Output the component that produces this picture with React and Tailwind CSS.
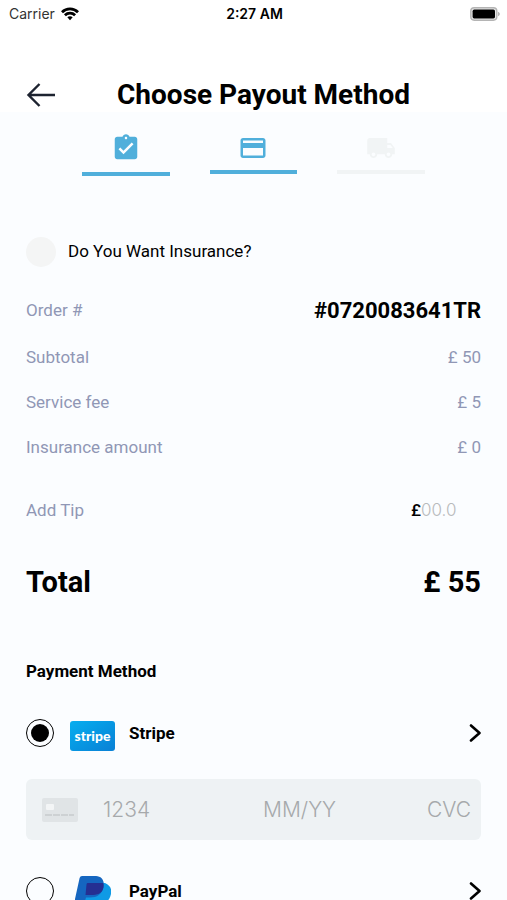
import { useState } from "react";
import { MdAssignmentTurnedIn, MdPayment, MdLocalShipping } from "react-icons/md";

const steps = [
  { label: "Order details", Icon: MdAssignmentTurnedIn, state: "done" },
  { label: "Payment", Icon: MdPayment, state: "current" },
  { label: "Delivery", Icon: MdLocalShipping, state: "next" },
];

const charges = [
  { label: "Subtotal", amount: 50 },
  { label: "Service fee", amount: 5 },
  { label: "Insurance amount", amount: 0 },
];

const StatusBar = () => (
  <div className="grid grid-cols-3 items-center h-7 pl-[9px] pr-[7px] font-['Inter',sans-serif] text-sm text-black">
    <div className="flex items-center gap-1.5">
      <span className="text-[#333]">Carrier</span>
      <svg viewBox="0 0 18 14" className="w-[18px] h-[14px]" fill="none" stroke="black" strokeWidth="2.8">
        <path d="M1 5.2C5.5.8 12.5.8 17 5.2" />
        <path d="M3.9 8.3c2.9-2.8 7.3-2.8 10.2 0" />
        <path d="M6.3 10.3c1.6-1.5 3.8-1.5 5.4 0L9 13.2z" fill="black" stroke="none" />
      </svg>
    </div>
    <span className="text-center font-semibold">2:27 AM</span>
    <svg viewBox="0 0 30 14" className="w-[30px] h-[14px] justify-self-end">
      <rect x="0.8" y="0.8" width="26" height="12.4" rx="3.4" fill="#e8e8e8" stroke="#b4b4b4" strokeWidth="1.4" />
      <rect x="2.6" y="2.6" width="22.4" height="8.8" rx="1.6" fill="black" />
      <path d="M28 4.8c2.4.8 2.4 3.6 0 4.4z" fill="#b4b4b4" />
    </svg>
  </div>
);

const Header = () => (
  <header className="grid grid-cols-[30px_1fr] items-center h-[84px] pt-[50px] px-[26px]">
    <button type="button" aria-label="Go back">
      <svg viewBox="0 0 30 26" className="w-[30px] h-[26px]" fill="none" stroke="#1d2330" strokeWidth="2.4">
        <path d="M29 13H3M13.5 2L2.5 13l11 11" />
      </svg>
    </button>
    <h1 className="pr-2.5 text-center text-[28px] leading-8 font-bold text-black whitespace-nowrap">
      Choose Payout Method
    </h1>
  </header>
);

const Steps = () => (
  <ol className="grid grid-cols-3 gap-10 px-[82px] pt-[21px]">
    {steps.map(({ label, Icon, state }) => (
      <li
        key={label}
        aria-label={label}
        className={`flex flex-col items-center ${state === "next" ? "text-[#f1f4f5]" : "text-[#50afdb]"}`}
      >
        <Icon className="size-[30px]" />
        <span
          className={`w-full h-1 bg-current ${state === "done" ? "mt-[9px]" : "mt-[7px]"}`}
        />
      </li>
    ))}
  </ol>
);

const StripeLogo = () => (
  <span className="flex items-center justify-center w-[45px] h-[30px] mt-1.5 rounded-[3px] bg-linear-to-br from-[#07aeef] to-[#0a80d5] font-['Lato',sans-serif] text-sm leading-4 font-black text-white">
    stripe
  </span>
);

const PayPalLogo = () => (
  <svg viewBox="0 0 36 42" className="w-9 h-[42px] mx-1 mt-3">
    <path d="M12 7h18c5 2 7 6 6 11-1.500 7.500-6.500 10.500-13 10.500h-4L16.500 41H5z" fill="#0f9ae5" />
    <path d="M7 0h14c5.500 0 9 5 7.500 11C27 18.500 22 21.500 15 21.500h-4L8 32H-2L4.600 2Q5.200 0 7 0z" fill="#1566c0" />
    <path d="M12.500 7H28q1 2 .5 4.500C27 18 22 19 16 19h-5.500l1-10.500Q11.600 7 12.500 7z" fill="#252f92" />
  </svg>
);

const Chevron = () => (
  <svg viewBox="0 0 12 20" className="w-3 h-5 ml-auto" fill="none" stroke="black" strokeWidth="2.6" strokeLinecap="round" strokeLinejoin="round">
    <path d="M2 2.500l8.500 7.500L2 17.500" />
  </svg>
);

const PaymentOption = ({ name, logo, checked, onChange }) => (
  <label className="flex items-center h-12 cursor-pointer">
    <span className="relative grid place-items-center size-7">
      <input
        type="radio"
        name="payment"
        checked={checked}
        onChange={onChange}
        className="peer appearance-none size-7 rounded-full border border-black"
      />
      <span className="absolute hidden peer-checked:block size-[18px] rounded-full bg-black" />
    </span>
    <span className="flex justify-center w-[45px] ml-4">{logo}</span>
    <span className="ml-[14px] text-[17px] leading-6 font-bold text-black">{name}</span>
    <Chevron />
  </label>
);

const CardFields = () => (
  <div className="flex items-center h-[61px] mt-[22px] pl-4 pr-[10px] rounded-md bg-[#eef2f4] font-['Inter',sans-serif] text-[21px] font-light">
    <svg viewBox="0 0 36 24" className="w-9 h-6 shrink-0">
      <rect width="36" height="24" rx="2" fill="#e0e4e6" />
      <rect x="4" y="6" width="8" height="6" rx="1" fill="#f3f5f6" />
      <path d="M3 17h29" stroke="#cdd1d3" strokeWidth="2" strokeDasharray="7 1" />
    </svg>
    <input aria-label="Card number" placeholder="1234" className="w-20 ml-[25px] outline-none placeholder:text-[#a6a9ab]" />
    <input aria-label="Expiry date" placeholder="MM/YY" className="w-20 mx-auto outline-none placeholder:text-[#a6a9ab]" />
    <input aria-label="Security code" placeholder="CVC" className="w-12 text-right outline-none placeholder:text-[#a6a9ab]" />
  </div>
);

const App = () => {
  const [insured, setInsured] = useState(false);
  const [method, setMethod] = useState("stripe");

  return (
    <div className="flex flex-col h-screen bg-white font-['Roboto',sans-serif]">
      <StatusBar />
      <Header />

      <main className="flex-1 overflow-y-auto [scrollbar-width:none] bg-[#fbfdff]">
        <Steps />

        <div className="px-[26px]">
          <label className="flex items-center gap-3 h-8 mt-[60px] text-[17px] text-black">
            <input
              type="checkbox"
              checked={insured}
              onChange={(e) => setInsured(e.target.checked)}
              className="appearance-none size-[30px] rounded-full bg-[#f4f5f5] checked:bg-[#50afdb]"
            />
            Do You Want Insurance?
          </label>

          <dl className="mt-[18px] text-[17px] text-[#9097b5]">
            <div className="flex items-center justify-between h-[49px]">
              <dt>Order #</dt>
              <dd className="text-[22px] font-bold text-black">#0720083641TR</dd>
            </div>
            {charges.map(({ label, amount }) => (
              <div key={label} className="flex items-center justify-between h-[45px]">
                <dt>{label}</dt>
                <dd>£ {amount}</dd>
              </div>
            ))}
          </dl>

          <div className="flex items-center justify-between h-12 mt-[17px] pr-5 text-[17px]">
            <label htmlFor="tip" className="text-[#9097b5]">Add Tip</label>
            <span className="flex items-center font-medium text-black">
              £
              <input
                id="tip"
                placeholder="00.0"
                className="w-10 font-['Inter',sans-serif] font-light outline-none placeholder:text-[#b8babc]"
              />
            </span>
          </div>

          <div className="flex items-center justify-between h-12 mt-6 text-[29px] font-bold text-black">
            <span>Total</span>
            <span>£ 55</span>
          </div>

          <h2 className="mt-[52px] text-[17px] leading-6 font-bold text-black">Payment Method</h2>

          <div className="mt-[26px] pb-10">
            <PaymentOption
              name="Stripe"
              logo={<StripeLogo />}
              checked={method === "stripe"}
              onChange={() => setMethod("stripe")}
            />
            {method === "stripe" && <CardFields />}
            <div className="mt-[27px]">
              <PaymentOption
                name="PayPal"
                logo={<PayPalLogo />}
                checked={method === "paypal"}
                onChange={() => setMethod("paypal")}
              />
            </div>
          </div>
        </div>
      </main>
    </div>
  );
};

export default App;
